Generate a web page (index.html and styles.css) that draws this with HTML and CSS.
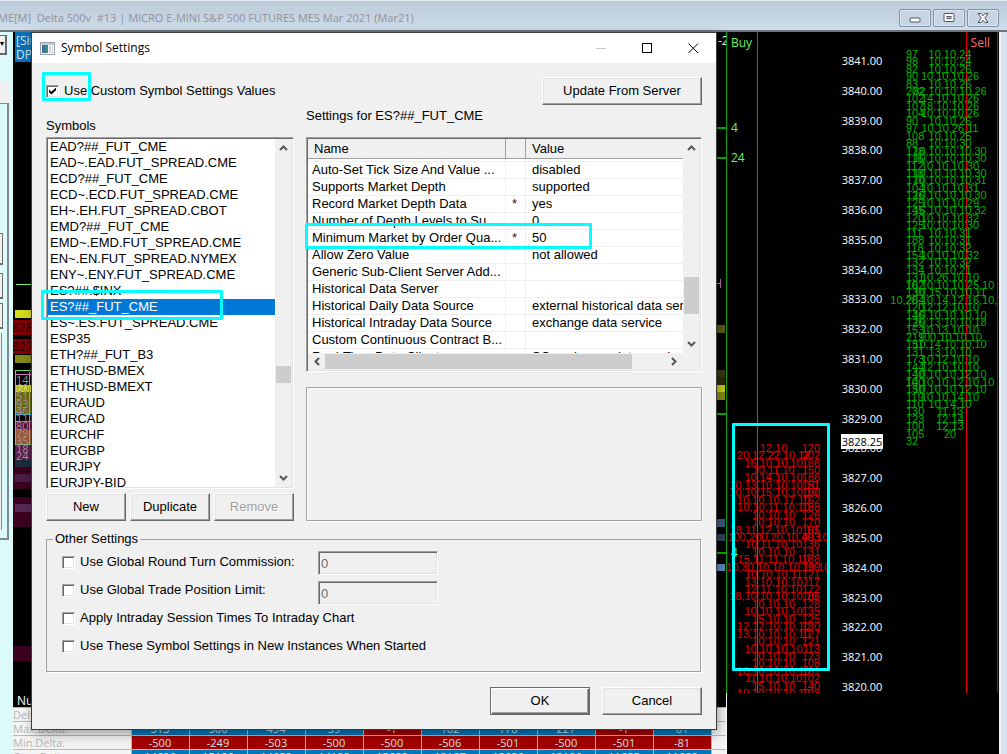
FILE: index.html
```html
<!DOCTYPE html>
<html lang="en">
<head>
    <meta charset="UTF-8">
    <meta name="viewport" content="width=device-width, initial-scale=1.0">
    <title>Symbol Settings</title>
    <link rel="stylesheet" href="styles.css">
</head>
<body>
    <div class="app">
        <header class="app-title">
            <div class="app-name">ME[M]&nbsp; Delta 500v&nbsp; #13 | MICRO E-MINI S&amp;P 500 FUTURES MES Mar 2021 (Mar21)</div>
            <div class="app-controls">
                <button class="app-btn" aria-label="Minimize">
                    <svg width="12" height="12" viewBox="0 0 12 12"><rect x="1" y="6" width="10" height="4" rx="1" fill="#fff" stroke="#4d5360"/></svg>
                </button>
                <button class="app-btn" aria-label="Restore">
                    <svg width="12" height="12" viewBox="0 0 12 12"><rect x="1" y="1.500" width="10" height="8" rx="1" fill="#fff" stroke="#4d5360"/><rect x="4" y="4.500" width="4" height="2" fill="#b9c7d8" stroke="#4d5360"/></svg>
                </button>
                <button class="app-btn" aria-label="Close">
                    <svg width="12" height="12" viewBox="0 0 12 12"><path d="M1 1.500h3l2 2.300 2-2.300h3L7.800 6 11 10.500H8L6 8.200 4 10.500H1L4.200 6z" fill="#fff" stroke="#4d5360"/></svg>
                </button>
            </div>
        </header>

        <div class="workspace">
            <aside class="side">
                <div class="side-combo">&#9662;</div>
                <div class="side-tab"></div>
                <div class="side-panel">
                    <div class="side-group"></div>
                    <div class="side-btn side-btn-tall"></div>
                    <div class="side-btn"></div>
                    <div class="side-btn"></div>
                    <div class="side-fill"></div>
                </div>
            </aside>

            <main class="chart">
                <div class="chart-body">
                    <svg class="chart-left" width="60" height="675" viewBox="13 32 60 675">
                        <rect x="15" y="32" width="58" height="30" fill="#0a72b4"/>
                        <text x="16" y="45">[Sim]</text>
                        <text x="16" y="59">DP</text>
                        <rect x="16" y="284" width="57" height="1" fill="#7cf07c"/>
                        <rect x="15" y="310" width="58" height="8" fill="#d6dc1e"/>
                        <rect x="13" y="320" width="60" height="15" fill="#850000"/>
                        <text class="dark" x="12" y="332">828.25</text>
                        <rect x="13" y="339" width="60" height="15" fill="#850000"/>
                        <text class="dark" x="12" y="351">827.25</text>
                        <rect x="15" y="355" width="58" height="8" fill="#85891a"/>
                        <rect x="15" y="385" width="58" height="7" fill="#d6dc1e"/>
                        <rect x="15" y="392" width="58" height="22" fill="#6a6c14"/>
                        <rect x="15" y="422" width="58" height="8" fill="#5a0c34"/>
                        <rect x="15" y="430" width="58" height="14" fill="#9a5a34"/>
                        <rect x="15" y="444" width="58" height="15" fill="#5c2050"/>
                        <rect x="15" y="459" width="58" height="8" fill="#1c2c3c"/>
                        <rect x="15.500" y="370.500" width="80" height="74" fill="none" stroke="#6cd06c"/>
                        <path d="M29.500 372v72" stroke="#a8b868"/>
                        <path d="M16 374.500h57" stroke="#e070c0"/>
                        <path d="M16 414.500h57M16 421.500h57" stroke="#20c8d8"/>
                        <text class="dim" x="16" y="384">14</text>
                        <text class="dim" x="16" y="392">60</text>
                        <text class="dim" x="16" y="400">51</text>
                        <text class="dim" x="16" y="408">93</text>
                        <text class="dim" x="16" y="415">46</text>
                        <text class="dim" x="16" y="422">11</text>
                        <text class="dim" x="16" y="430">80</text>
                        <text class="dim" x="16" y="437">79</text>
                        <text class="dim" x="16" y="445">35</text>
                        <text class="dim" x="16" y="453">18</text>
                        <text class="dim" x="16" y="460">24</text>
                        <rect x="13" y="467" width="60" height="22" fill="#3c0020"/>
                        <rect x="15" y="474" width="58" height="8" fill="#4c1c48"/>
                        <rect x="13" y="497" width="60" height="30" fill="#3c0020"/>
                        <rect x="15" y="504" width="58" height="8" fill="#582858"/>
                        <rect x="13" y="646" width="60" height="15" fill="#3c0020"/>
                        <text class="white" x="17" y="705">Number</text>
                    </svg>
                    <svg class="chart-right" width="14" height="675" viewBox="712 32 14 675">
                        <text class="white" x="718" y="45">-2</text>
                        <path d="M712 128h14M712 158h14M712 414h14M712 553h14" stroke="#00b400" stroke-width="2"/>
                        <path d="M712 283.500h9M720.500 279v9" stroke="#c070b0"/>
                        <rect x="712" y="325" width="13" height="8" fill="#5c5c10"/>
                        <rect x="712" y="370" width="13" height="7" fill="#3a3a0c"/>
                        <rect x="712" y="377" width="13" height="8" fill="#2a2a08"/>
                        <rect x="712" y="385" width="13" height="7" fill="#c8d020"/>
                        <rect x="712" y="392" width="13" height="8" fill="#888c18"/>
                        <rect x="712" y="519" width="13" height="8" fill="#3e5a80"/>
                        <rect x="712" y="534" width="13" height="7" fill="#2c4560"/>
                        <rect x="712" y="564" width="13" height="7" fill="#5f8ac4"/>
                    </svg>
                </div>
                <table class="delta">
                    <tr><th>Delta:</th><td class="up"></td><td class="up"></td><td class="up"></td><td class="up"></td><td class="up"></td><td class="up"></td><td class="up"></td><td class="up"></td><td class="up"></td><td class="up"></td><td class="rest"></td></tr>
                    <tr><th>Max.Delta:</th><td class="up">313</td><td class="up">500</td><td class="up">494</td><td class="up">39</td><td class="down">-1</td><td class="up">102</td><td class="up">178</td><td class="up">227</td><td class="down">-1</td><td class="up">61</td><td class="rest"></td></tr>
                    <tr><th>Min.Delta:</th><td class="down">-500</td><td class="down">-249</td><td class="down">-503</td><td class="down">-500</td><td class="down">-500</td><td class="down">-506</td><td class="down">-501</td><td class="down">-500</td><td class="down">-501</td><td class="down">-81</td><td class="rest"></td></tr>
                    <tr><th>Cum.Delta:</th><td class="up">14696</td><td class="up">15196</td><td class="up">14688</td><td class="up">14188</td><td class="up">13688</td><td class="up">13187</td><td class="up">12686</td><td class="up">12186</td><td class="up">11685</td><td class="up">11680</td><td class="rest"></td></tr>
                </table>
            </main>

            <section class="dom">
                <div class="ladder">
                    <div class="side-col buy">
                        <div class="side-name">Buy</div>
                        <div class="depth" id="buyDepth"></div>
                        <span class="level level-a">4</span>
                        <span class="level level-b">24</span>
                        <span class="level level-c">4</span>
                    </div>
                    <div class="price-col">
                        <div class="prices" id="prices"></div>
                        <span class="last-price">3828.25</span>
                    </div>
                    <div class="side-col sell">
                        <div class="side-name">Sell</div>
                        <div class="depth" id="sellDepth"></div>
                    </div>
                </div>
                <div class="mark mark-depth"></div>
            </section>
        </div>

        <form class="dialog">
            <div class="dialog-title">
                <svg width="15" height="13" viewBox="0 0 15 13">
                    <rect x="0.500" y="0.500" width="14" height="12" fill="#f4f6f8" stroke="#9aa4ae"/>
                    <rect x="1" y="1" width="13" height="2" fill="#c4ccd4"/>
                    <rect x="2" y="3" width="6" height="8" fill="#3a8c78"/>
                    <rect x="2" y="3" width="3" height="8" fill="#3c70a0"/>
                    <rect x="9" y="4" width="2" height="7" fill="#d4d8dc"/>
                    <rect x="12" y="4" width="1" height="7" fill="#d4d8dc"/>
                </svg>
                <span class="dialog-name">Symbol Settings</span>
                <button type="button" class="cap-btn" aria-label="Minimize"><svg width="11" height="11" viewBox="0 0 11 11"><path d="M0 5.500h10" stroke="#c4c4c4"/></svg></button>
                <button type="button" class="cap-btn" aria-label="Maximize"><svg width="11" height="11" viewBox="0 0 11 11"><rect x="0.500" y="0.500" width="9" height="9" fill="none" stroke="#000"/></svg></button>
                <button type="button" class="cap-btn" aria-label="Close"><svg width="11" height="11" viewBox="0 0 11 11"><path d="M0.500 0.500l9.500 9.500M10 0.500L0.500 10" stroke="#000"/></svg></button>
            </div>

            <div class="dialog-body">
                <div class="top-row">
                    <label class="check"><input type="checkbox" checked>Use Custom Symbol Settings Values</label>
                    <button type="button" class="btn btn-update">Update From Server</button>
                    <div class="mark mark-check"></div>
                </div>

                <div class="columns">
                    <div class="symbols">
                        <label class="list-label" for="symbols">Symbols</label>
                        <div class="sunken symbol-box">
                            <select class="symbol-list" id="symbols" size="22">
                                <option>EAD?##_FUT_CME</option>
                                <option>EAD~.EAD.FUT_SPREAD.CME</option>
                                <option>ECD?##_FUT_CME</option>
                                <option>ECD~.ECD.FUT_SPREAD.CME</option>
                                <option>EH~.EH.FUT_SPREAD.CBOT</option>
                                <option>EMD?##_FUT_CME</option>
                                <option>EMD~.EMD.FUT_SPREAD.CME</option>
                                <option>EN~.EN.FUT_SPREAD.NYMEX</option>
                                <option>ENY~.ENY.FUT_SPREAD.CME</option>
                                <option>ES?##.$INX</option>
                                <option selected>ES?##_FUT_CME</option>
                                <option>ES~.ES.FUT_SPREAD.CME</option>
                                <option>ESP35</option>
                                <option>ETH?##_FUT_B3</option>
                                <option>ETHUSD-BMEX</option>
                                <option>ETHUSD-BMEXT</option>
                                <option>EURAUD</option>
                                <option>EURCAD</option>
                                <option>EURCHF</option>
                                <option>EURGBP</option>
                                <option>EURJPY</option>
                                <option>EURJPY-BID</option>
                            </select>
                            <div class="scroll-v scroll-symbols">
                                <svg width="9" height="6" viewBox="0 0 9 6"><path d="M1 5l3.500-3.500L8 5" fill="none" stroke="#555" stroke-width="2"/></svg>
                                <div class="thumb"></div>
                                <svg width="9" height="6" viewBox="0 0 9 6"><path d="M1 1l3.500 3.500L8 1" fill="none" stroke="#555" stroke-width="2"/></svg>
                            </div>
                            <div class="mark mark-symbol"></div>
                        </div>
                        <div class="btn-row">
                            <button type="button" class="btn">New</button>
                            <button type="button" class="btn">Duplicate</button>
                            <button type="button" class="btn" disabled>Remove</button>
                        </div>
                    </div>

                    <div class="settings">
                        <div class="settings-label">Settings for ES?##_FUT_CME</div>
                        <div class="sunken settings-box">
                            <div class="table-view">
                                <table class="props">
                                    <thead>
                                        <tr><th class="col-name">Name</th><th class="col-flag"></th><th>Value</th></tr>
                                    </thead>
                                    <tbody>
                                        <tr class="cut"><td></td><td></td><td></td></tr>
                                        <tr><td>Auto-Set Tick Size And Value ...</td><td></td><td>disabled</td></tr>
                                        <tr><td>Supports Market Depth</td><td></td><td>supported</td></tr>
                                        <tr><td>Record Market Depth Data</td><td class="flag">*</td><td>yes</td></tr>
                                        <tr><td>Number of Depth Levels to Su...</td><td></td><td>0</td></tr>
                                        <tr><td>Minimum Market by Order Qua...</td><td class="flag">*</td><td>50</td></tr>
                                        <tr><td>Allow Zero Value</td><td></td><td>not allowed</td></tr>
                                        <tr><td>Generic Sub-Client Server Add...</td><td></td><td></td></tr>
                                        <tr><td>Historical Data Server</td><td></td><td></td></tr>
                                        <tr><td>Historical Daily Data Source</td><td></td><td>external historical data service</td></tr>
                                        <tr><td>Historical Intraday Data Source</td><td></td><td>exchange data service</td></tr>
                                        <tr><td>Custom Continuous Contract B...</td><td></td><td></td></tr>
                                        <tr><td>Real-Time Data Client</td><td></td><td>SC exchange data service</td></tr>
                                    </tbody>
                                </table>
                            </div>
                            <div class="scroll-v scroll-props">
                                <svg width="9" height="6" viewBox="0 0 9 6"><path d="M1 5l3.500-3.500L8 5" fill="none" stroke="#555" stroke-width="2"/></svg>
                                <div class="thumb"></div>
                                <svg width="9" height="6" viewBox="0 0 9 6"><path d="M1 1l3.500 3.500L8 1" fill="none" stroke="#555" stroke-width="2"/></svg>
                            </div>
                            <div class="scroll-h">
                                <svg width="6" height="9" viewBox="0 0 6 9"><path d="M5 1L1.500 4.500 5 8" fill="none" stroke="#555" stroke-width="2"/></svg>
                                <div class="thumb"></div>
                                <svg width="6" height="9" viewBox="0 0 6 9"><path d="M1 1l3.500 3.500L1 8" fill="none" stroke="#555" stroke-width="2"/></svg>
                            </div>
                            <div class="mark mark-row"></div>
                        </div>
                        <div class="info"></div>
                    </div>
                </div>

                <fieldset class="other">
                    <legend>Other Settings</legend>
                    <div class="checks">
                        <label class="check"><input type="checkbox">Use Global Round Turn Commission:</label>
                        <label class="check"><input type="checkbox">Use Global Trade Position Limit:</label>
                        <label class="check"><input type="checkbox">Apply Intraday Session Times To Intraday Chart</label>
                        <label class="check"><input type="checkbox">Use These Symbol Settings in New Instances When Started</label>
                    </div>
                    <div class="fields">
                        <input class="sunken field" type="text" value="0" aria-label="Round turn commission" disabled>
                        <input class="sunken field" type="text" value="0" aria-label="Trade position limit" disabled>
                    </div>
                </fieldset>

                <div class="footer">
                    <button type="button" class="btn btn-default">OK</button>
                    <button type="button" class="btn">Cancel</button>
                </div>
            </div>
        </form>
    </div>
    <script src="script.js"></script>
</body>
</html>
```
FILE: styles.css
```css
* {
    box-sizing: border-box;
}

body {
    margin: 0;
    font-family: "Liberation Sans", Arial, sans-serif;
    font-size: 13px;
    line-height: 16px;
    color: #000;
}

button, input, select {
    font: inherit;
    color: inherit;
    margin: 0;
}

.app {
    height: 100vh;
    position: relative;
    overflow: hidden;
    display: flex;
    flex-direction: column;
    background: #d6e4f2;
}

/* application window */
.app-title {
    height: 32px;
    flex: none;
    display: flex;
    justify-content: space-between;
    align-items: center;
    padding: 4px 8px 0 0;
    background: linear-gradient(#bccad9, #cfdcea);
    border-top: 1px solid #e4ecf4;
    border-bottom: 2px solid #6e747c;
}

.app-name {
    margin-left: -2px;
    font-family: "Open Sans", sans-serif;
    font-size: 11px;
    color: #8e9299;
    white-space: nowrap;
}

.app-controls {
    display: flex;
    gap: 2px;
}

.app-btn {
    width: 32px;
    height: 18px;
    padding: 0;
    display: flex;
    align-items: center;
    justify-content: center;
    background: #c6d4e4;
    border: 1px solid #8492a8;
    border-radius: 2px;
    box-shadow: inset 0 0 0 1px #dce6f0;
}

.workspace {
    flex: 1;
    min-height: 0;
    display: flex;
    padding-right: 6px;
}

.side {
    width: 13px;
    flex: none;
    overflow: hidden;
    background: #dcfafa;
}

.side-combo {
    width: 7px;
    height: 20px;
    margin-top: 3px;
    background: #f0f0f0;
    border: solid #696969;
    border-width: 1px 2px 2px 0;
    font-size: 8px;
    overflow: hidden;
}

.side-tab {
    width: 9px;
    height: 22px;
    margin-top: 26px;
    background: #f0f0f0;
}

.side-panel {
    width: 9px;
    height: 437px;
    border: solid #808890;
    border-width: 1px 2px 2px 0;
    display: flex;
    flex-direction: column;
    gap: 4px;
}

.side-group {
    height: 125px;
}

.side-btn {
    width: 3px;
    height: 26px;
    background: #f0f0f0;
    border: solid #696969;
    border-width: 1px 1px 2px 0;
}

.side-btn-tall {
    height: 32px;
    margin-bottom: 4px;
}

.side-fill {
    flex: 1;
    width: 2px;
    margin-bottom: 8px;
    background: #f0f0f0;
    border-right: 1px solid #808890;
}

.chart {
    flex: 1;
    min-width: 0;
    overflow: hidden;
    display: flex;
    flex-direction: column;
    background: #f4f4f4;
}

.chart-body {
    height: 675px;
    flex: none;
    display: flex;
    justify-content: space-between;
    background: #000;
}

.chart-body text {
    font-family: "Open Sans", sans-serif;
    font-size: 12px;
    fill: #d0e4f4;
}

.chart-body .dark {
    fill: #1c0000;
}

.chart-body .dim {
    fill: #a8909c;
    font-size: 11px;
}

.chart-body .white {
    fill: #fff;
}

.delta {
    width: 100%;
    table-layout: fixed;
    border-collapse: collapse;
    font-family: "Open Sans", sans-serif;
    font-size: 11px;
    line-height: 13px;
    text-align: center;
}

.delta th, .delta td {
    height: 14px;
    padding: 0;
    border: 1px solid #b8b8b8;
    color: #d4e4ec;
}

.delta td {
    width: 58px;
}

.delta th {
    width: 118px;
    border-left: 0;
    color: #b4b4b4;
    font-weight: normal;
    text-align: left;
}

.delta .rest {
    width: auto;
    border-right: 0;
}

.delta .up {
    background: #0078b8;
}

.delta .down {
    background: #a40000;
}

/* depth ladder */
.dom {
    width: 275px;
    flex: none;
    position: relative;
    background: #000;
    border-left: 1px solid #fff;
    border-right: 2px solid #f4f4f4;
}

.ladder {
    height: 661px;
    margin-left: -1px;
    overflow: hidden;
    display: grid;
    grid-template-columns: 93px 1fr 94px;
    padding-right: 1px;
    border-left: 1px solid #00a400;
    font-family: "Open Sans", sans-serif;
    font-size: 12px;
}

.side-col {
    position: relative;
    min-width: 0;
}

.buy {
    color: #6cf06c;
    background: linear-gradient(#00a400, #00a400) 30px 0 / 1px 100% no-repeat;
}

.sell {
    color: #ff7070;
    padding-right: 1px;
    border-right: 1px solid #d80000;
    background: linear-gradient(#e80000, #e80000) 62px 0 / 1px 100% no-repeat;
}

.side-name {
    height: 22px;
    line-height: 22px;
    padding: 0 4px;
}

.sell .side-name {
    text-align: right;
    padding: 0 6px;
}

.depth {
    display: flex;
    flex-direction: column;
    font-family: "Liberation Sans", Arial, sans-serif;
    font-size: 11px;
    line-height: 12px;
    white-space: nowrap;
}

.buy .depth {
    height: 253px;
    margin-top: 390px;
    color: #e00000;
}

.sell .depth {
    height: 395px;
    margin-top: -4px;
    color: #00b400;
}

.depth-row {
    flex: 1 1 0;
    min-height: 0;
    display: grid;
    align-items: center;
    align-content: center;
    grid-template-columns: 100%;
}

.depth-row span {
    grid-area: 1 / 1;
}

.depth-row .orders {
    justify-self: center;
}

.buy .total {
    justify-self: end;
}

.sell .total {
    padding-left: 2px;
}

.level {
    position: absolute;
    left: 4px;
}

.level-a {
    top: 88px;
}

.level-b {
    top: 118px;
}

.level-c {
    top: 513px;
}

.price-col {
    position: relative;
    text-align: center;
    font-size: 11px;
    color: #fff;
}

.prices {
    height: 656px;
    margin-top: 14px;
    display: flex;
    flex-direction: column;
}

.price {
    flex: 1 1 0;
    display: flex;
    align-items: center;
    justify-content: center;
}

.last-price {
    position: absolute;
    top: 402px;
    left: 50%;
    margin-left: -21px;
    width: 42px;
    line-height: 15px;
    background: #fff;
    color: #000;
}

/* highlight frames */
.mark {
    position: absolute;
    border: 3px solid #00ffff;
    border-radius: 1px;
    pointer-events: none;
}

.mark-depth {
    left: 5px;
    top: 391px;
    width: 98px;
    height: 248px;
}

.mark-check {
    left: -4px;
    top: -5px;
    width: 49px;
    height: 29px;
}

.mark-symbol {
    left: -6px;
    top: 152px;
    width: 182px;
    height: 30px;
}

.mark-row {
    left: -2px;
    top: 85px;
    width: 287px;
    height: 26px;
}

/* dialog */
.dialog {
    position: absolute;
    left: 32px;
    right: 291px;
    top: 33px;
    background: #f0f0f0;
    box-shadow: 0 0 0 1px #3c3c3c, 2px 4px 12px rgba(0, 0, 0, 0.4);
}

.dialog-title {
    height: 30px;
    display: flex;
    align-items: center;
    padding-left: 8px;
    background: #fff;
}

.dialog-name {
    flex: 1;
    margin-left: 6px;
    font-family: "Open Sans", sans-serif;
    font-size: 12px;
}

.cap-btn {
    width: 46px;
    height: 28px;
    padding: 0;
    display: flex;
    align-items: center;
    justify-content: center;
    background: none;
    border: 0;
}

.dialog-body {
    padding: 14px;
}

.top-row {
    position: relative;
    display: flex;
    justify-content: space-between;
    align-items: center;
}

.check {
    display: flex;
    align-items: center;
    gap: 5px;
    height: 28px;
}

.check input {
    appearance: none;
    flex: none;
    width: 13px;
    height: 13px;
    display: grid;
    place-content: center;
    background: #fff;
    border: 1px solid;
    border-color: #a0a0a0 #fff #fff #a0a0a0;
    box-shadow: inset 1px 1px #696969, inset -1px -1px #e3e3e3;
}

.check input:checked::before {
    content: "";
    width: 7px;
    height: 7px;
    background: #000;
    clip-path: polygon(0 29%, 35% 60%, 100% 0, 100% 40%, 35% 100%, 0 69%);
}

.btn {
    height: 28px;
    padding: 0;
    background: #f0f0f0;
    border: 1px solid;
    border-color: #fff #696969 #696969 #fff;
    box-shadow: inset -1px -1px #a0a0a0, inset 1px 1px #e3e3e3;
}

.btn:disabled {
    color: #a0a0a0;
    text-shadow: 1px 1px #fff;
}

.btn-update {
    width: 160px;
}

.btn-default {
    border-color: #696969;
    box-shadow: inset 1px 1px #fff, inset -1px -1px #696969, inset -2px -2px #a0a0a0;
}

.columns {
    display: flex;
    gap: 12px;
}

.symbols {
    width: 248px;
    flex: none;
}

.list-label {
    display: block;
    padding: 13px 0 3px;
}

.sunken {
    border: 1px solid;
    border-color: #a0a0a0 #fff #fff #a0a0a0;
    box-shadow: inset 1px 1px #696969, inset -1px -1px #e3e3e3;
}

.symbol-box {
    position: relative;
    height: 352px;
    display: flex;
    padding: 1px;
    background: #fff;
}

.symbol-list {
    flex: 1;
    height: 348px;
    padding: 0;
    border: 0;
    border-radius: 0;
    outline: 0;
    background: #fff;
    overflow: hidden;
}

.symbol-list option {
    height: 16px;
    min-height: 16px;
    padding: 0 2px;
}

.symbol-list option:checked {
    background: linear-gradient(#0078d7, #0078d7);
    -webkit-text-fill-color: #fff;
}

.scroll-v {
    width: 17px;
    display: flex;
    flex-direction: column;
    align-items: center;
    justify-content: space-between;
    padding: 6px 0;
    background: #f0f0f0;
}

.scroll-v .thumb {
    width: 15px;
    background: #cdcdcd;
}

.scroll-symbols .thumb {
    height: 17px;
    margin-top: 122px;
}

.btn-row {
    display: grid;
    grid-template-columns: repeat(3, 1fr);
    gap: 4px;
    margin-top: 4px;
}

.settings {
    flex: 1;
    min-width: 0;
    display: flex;
    flex-direction: column;
}

.settings-label {
    padding: 3px 0 13px;
}

.settings-box {
    position: relative;
    height: 235px;
    display: grid;
    grid-template-columns: 1fr 17px;
    grid-template-rows: 1fr 17px;
    padding: 1px;
    background: #f0f0f0;
}

.table-view {
    min-width: 0;
    overflow: hidden;
    background: #fff;
    height: 214px;
}

.props {
    width: 100%;
    table-layout: fixed;
    border-spacing: 0;
}

.props th {
    height: 20px;
    padding: 1px 6px 0;
    font-weight: normal;
    text-align: left;
    background: #f0f0f0;
    border-right: 1px solid #a0a0a0;
    border-bottom: 1px solid #a0a0a0;
}

.props th:last-child {
    border-right: 0;
}

.props .col-name {
    width: 198px;
}

.props .col-flag {
    width: 20px;
}

.props td {
    height: 17px;
    padding: 0 4px;
    border-right: 1px solid #f0f0f0;
    border-bottom: 1px solid #f0f0f0;
    white-space: nowrap;
    overflow: hidden;
}

.props td:last-child {
    padding: 0 0 0 6px;
    border-right: 0;
}

.props td.flag {
    padding-left: 6px;
    color: #301040;
}

.props .cut td {
    height: 3px;
}

.scroll-props .thumb {
    height: 37px;
    margin-top: 98px;
}

.scroll-h {
    display: flex;
    align-items: center;
    padding: 0 6px;
}

.scroll-h .thumb {
    width: 307px;
    height: 15px;
    margin: 0 auto 0 5px;
    background: #cdcdcd;
}

.info {
    flex: 1;
    margin-top: 15px;
    border: 1px solid #a0a0a0;
    box-shadow: inset 1px 1px #fff, 1px 1px #fff;
}

.other {
    display: flex;
    gap: 17px;
    margin: 10px 1px 0 0;
    padding: 1px 15px 11px;
    border: 1px solid #a0a0a0;
    box-shadow: 1px 1px #fff;
}

.other legend {
    margin-left: -9px;
    padding: 0 2px;
}

.checks {
    width: 239px;
    white-space: nowrap;
}

.fields {
    display: flex;
    flex-direction: column;
    gap: 6px;
    padding-top: 3px;
}

.field {
    width: 120px;
    height: 24px;
    padding: 0 2px;
    background: #f0f0f0;
    border-radius: 0;
    color: #6d6d6d;
}

.footer {
    display: grid;
    grid-template-columns: 100px 100px;
    justify-content: end;
    gap: 12px;
    margin-top: 15px;
}
```
FILE: script.js
```js
// [total, resting orders] for each tick, top to bottom
const sellRows = [
    ["97", "10,10,24"], ["98", "10,10,24"], ["82", "10,10,26"], ["90", "10,10,10,26"], ["83", "10,10,26"],
    ["202", "82,10,10,10,26"], ["102", "14,10,10,26"], ["107", "18,10,10,26"], ["104", "10,10,10,26"],
    ["90", "10,10,26"], ["97", "10,10,26,11"], ["108", "10,10,25"], ["88", "10,10,30"],
    ["178", "10,10,10,10,30"], ["116", "10,10,10,10,30"], ["112", "10,10,10,30"], ["118", "10,10,10,10,30"],
    ["170", "10,10,10,10,31"], ["104", "10,10,10,31"], ["126", "10,10,10,10,30"], ["125", "10,10,10,29"],
    ["145", "16,10,10,10,32"], ["120", "10,10,10,32"], ["125", "10,10,10,30"], ["111", "10,10,31"],
    ["188", "10,10,31"], ["118", "10,10,32"], ["154", "10,10,10,32"], ["132", "10,10,32"], ["134", "10,10,21"],
    ["131", "10,26,10,10"], ["162", "10,10,10,10,25,10"], ["130", "10,15,10,10,11"],
    ["264", "10,28,10,14,12,16,10,10"], ["120", "12,12,10,10"], ["146", "10,10,10,10,10"],
    ["126", "10,13,10,10,18"], ["153", "10,13,10,10"], ["219", "100,10,10,10"], ["151", "10,14,10,10,10"],
    ["131", "13,10,10"], ["173", "10,12,10,10"], ["144", "12,10,10,10"], ["140", "10,10,10,12,10"],
    ["140", "10,10,10,12,10,10"], ["150", "10,10,10,12,10"], ["119", "10,10,14,10"], ["110", "10,14,10"],
    ["130", "11,13"], ["123", "12,14"], ["100", "12,13"], ["105", "20"], ["32", ""]
];

const buyRows = [
    ["120", "12,10"], ["202", "20,12,22,10,12"], ["166", "16,10,10,10"], ["150", "10,11,10"],
    ["166", "10,14,10,10"], ["151", "10,13,10,10,10,10"], ["160", "10,10,15,10,10,10"],
    ["162", "10,10,10,17,10"], ["188", "10,10,11,10,10"], ["126", "10,10,10"], ["170", "10,10,10"],
    ["165", "18,11,12,10,10,10"], ["493", "1,100,200,20,10,40,10"], ["136", "10,11,10,10"],
    ["131", "10,10,10"], ["138", "15,11,11,10,10"], ["199", "1,10,30,10,10,10,10,10"],
    ["121", "10,10,10,11"], ["117", "13,10,10,10"], ["172", "12,11,10,10"], ["186", "18,10,10,10,10,10"],
    ["128", "10,10,10"], ["135", "10,10,10,10"], ["125", "15,10,10"], ["130", "12,12,10,10,10"],
    ["127", "13,10,10,10,10"], ["121", "10,10,10"], ["113", "10,10,10,10"], ["123", "10,10,10"],
    ["108", "10,10,10"], ["161", "10,10,10,10,10"], ["102", "11,10,10,10"], ["140", "15,10,10"],
    ["108", "10,10,10,10,10"]
];

function drawDepth(id, rows) {
    document.getElementById(id).innerHTML = rows.map(([total, orders]) => `
        <div class="depth-row"><span class="orders">${orders}</span><span class="total">${total}</span></div>
    `).join('');
}

function drawPrices() {
    let html = '';
    for (let price = 3841; price >= 3820; price--) {
        html += `<div class="price">${price.toFixed(2)}</div>`;
    }
    document.getElementById('prices').innerHTML = html;
}

drawDepth('sellDepth', sellRows);
drawDepth('buyDepth', buyRows);
drawPrices();
```
